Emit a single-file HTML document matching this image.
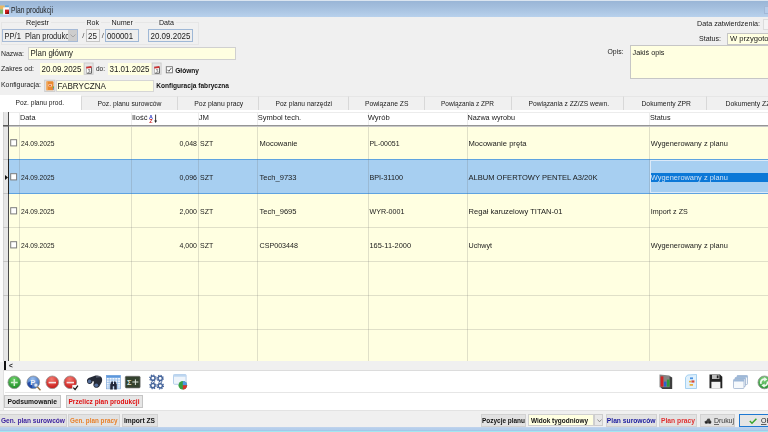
<!DOCTYPE html>
<html lang="pl"><head><meta charset="utf-8"><title>Plan produkcji</title>
<style>
html,body{margin:0;padding:0;}
body{width:768px;height:432px;overflow:hidden;position:relative;background:#f0f0f0;font-family:"Liberation Sans", sans-serif;}
.b{position:absolute;box-sizing:border-box;}
svg{position:absolute;overflow:visible;}
svg.t{left:0;top:0;font-family:"Liberation Sans", sans-serif;white-space:pre;will-change:transform;}
</style></head><body>
<div class="b" style="left:0px;top:0px;width:768px;height:16.5px;background:linear-gradient(#98b4d5 0%,#a3bedd 40%,#b8d1ec 100%);"></div>
<div class="b" style="left:0px;top:0px;width:768px;height:1px;background:#dbe5f0;"></div>
<svg style="left:0;top:5px" width="10" height="10" viewBox="0 0 10 10"><rect x="0" y="0.5" width="4.6" height="4" fill="#eab862"/><rect x="0" y="4.5" width="3.2" height="4.2" fill="#7fb96c"/><rect x="5" y="0.4" width="3.8" height="1.6" fill="#5aa8df"/><rect x="3.2" y="2.4" width="5.8" height="7.2" fill="#fdfdfd"/><rect x="5" y="4.6" width="4" height="4.4" fill="#cc1f1f"/><path d="M5 9 L9 9 L9 6 Z" fill="#8e1010"/></svg>
<svg class="t" width="768" height="432">
<text x="11" y="13" font-size="8.4" fill="#1e1e1e" textLength="42" lengthAdjust="spacingAndGlyphs">Plan produkcji</text>
</svg>
<div class="b" style="left:763.5px;top:6px;width:6px;height:8px;background:#b6cdea;border:1px solid #a2b8d6;"></div>
<div class="b" style="left:0.5px;top:22px;width:198.5px;height:22.5px;border:1px solid #e6e6e6;"></div>
<div class="b" style="left:24px;top:20px;width:27px;height:4px;background:#f0f0f0;"></div>
<svg class="t" width="768" height="432">
<text x="26" y="25" font-size="7.8" fill="#1a1a1a" textLength="23" lengthAdjust="spacingAndGlyphs">Rejestr</text>
</svg>
<div class="b" style="left:85px;top:20px;width:15.5px;height:4px;background:#f0f0f0;"></div>
<svg class="t" width="768" height="432">
<text x="86.5" y="25" font-size="7.8" fill="#1a1a1a" textLength="12.5" lengthAdjust="spacingAndGlyphs">Rok</text>
</svg>
<div class="b" style="left:110px;top:20px;width:24.5px;height:4px;background:#f0f0f0;"></div>
<svg class="t" width="768" height="432">
<text x="111.5" y="25" font-size="7.8" fill="#1a1a1a" textLength="21.5" lengthAdjust="spacingAndGlyphs">Numer</text>
</svg>
<div class="b" style="left:157.5px;top:20px;width:18px;height:4px;background:#f0f0f0;"></div>
<svg class="t" width="768" height="432">
<text x="159" y="25" font-size="7.8" fill="#1a1a1a" textLength="15" lengthAdjust="spacingAndGlyphs">Data</text>
</svg>
<div class="b" style="left:2px;top:29px;width:76px;height:13px;background:#eeeeee;border:1px solid #a6bad6;"></div>
<svg class="t" width="768" height="432">
<text x="4.5" y="39" font-size="9.2" fill="#1a1a1a" textLength="64.5" lengthAdjust="spacingAndGlyphs">PP/1  Plan produkc</text>
</svg>
<div class="b" style="left:67.7px;top:30px;width:9.3px;height:11px;background:#cdcdcd;"></div>
<svg style="left:70px;top:34px" width="6" height="4" viewBox="0 0 6 4"><path d="M0.5 0.5 L3 3 L5.5 0.5" fill="none" stroke="#9a9a9a" stroke-width="0.8"/></svg>
<svg class="t" width="768" height="432">
<text x="82.3" y="38" font-size="7.6" fill="#444">/</text>
</svg>
<div class="b" style="left:86px;top:29px;width:14px;height:13px;background:#f4f4f4;border:1px solid #c4c4c4;"></div>
<svg class="t" width="768" height="432">
<text x="88" y="39" font-size="9.2" fill="#1a1a1a" textLength="9" lengthAdjust="spacingAndGlyphs">25</text>
<text x="101.8" y="38" font-size="7.6" fill="#444">/</text>
</svg>
<div class="b" style="left:105px;top:29px;width:34px;height:13px;background:#eeeeee;border:1px solid #9fb8d6;"></div>
<svg class="t" width="768" height="432">
<text x="107" y="39" font-size="9.2" fill="#1a1a1a" textLength="26" lengthAdjust="spacingAndGlyphs">000001</text>
</svg>
<div class="b" style="left:148.3px;top:29px;width:44.5px;height:13px;background:#eeeeee;border:1px solid #9fb8d6;"></div>
<svg class="t" width="768" height="432">
<text x="150.5" y="39" font-size="9.2" fill="#1a1a1a" textLength="40" lengthAdjust="spacingAndGlyphs">20.09.2025</text>
<text x="697" y="26" font-size="7.8" fill="#1a1a1a" textLength="63" lengthAdjust="spacingAndGlyphs">Data zatwierdzenia:</text>
</svg>
<div class="b" style="left:763px;top:18.7px;width:8px;height:11.5px;background:#f4f4f4;border:1px solid #dcdcdc;"></div>
<svg class="t" width="768" height="432">
<text x="699" y="41" font-size="7.8" fill="#1a1a1a" textLength="22" lengthAdjust="spacingAndGlyphs">Status:</text>
</svg>
<div class="b" style="left:727px;top:33px;width:44px;height:12px;background:#ffffe1;border:1px solid #c6c6c6;"></div>
<svg class="t" width="768" height="432">
<text x="730" y="41" font-size="7.9" fill="#1a1a1a" textLength="38.6" lengthAdjust="spacingAndGlyphs">W przygoto</text>
<text x="1" y="56" font-size="7.8" fill="#1a1a1a" textLength="23" lengthAdjust="spacingAndGlyphs">Nazwa:</text>
</svg>
<div class="b" style="left:28px;top:46.5px;width:207.5px;height:13.5px;background:#ffffe1;border:1px solid #d0d0d0;"></div>
<svg class="t" width="768" height="432">
<text x="30.5" y="56" font-size="9.2" fill="#1a1a1a" textLength="42.5" lengthAdjust="spacingAndGlyphs">Plan główny</text>
<text x="607.5" y="54" font-size="7.8" fill="#1a1a1a" textLength="16" lengthAdjust="spacingAndGlyphs">Opis:</text>
</svg>
<div class="b" style="left:629.5px;top:45px;width:140px;height:34px;background:#ffffe1;border:1px solid #c6c6c6;"></div>
<svg class="t" width="768" height="432">
<text x="632.5" y="55" font-size="7.8" fill="#1a1a1a" textLength="32" lengthAdjust="spacingAndGlyphs">Jakiś opis</text>
<text x="1" y="71" font-size="7.8" fill="#1a1a1a" textLength="33" lengthAdjust="spacingAndGlyphs">Zakres od:</text>
</svg>
<div class="b" style="left:40px;top:63px;width:43.5px;height:12px;background:#ffffe1;"></div>
<svg class="t" width="768" height="432">
<text x="41.5" y="72" font-size="9.2" fill="#1a1a1a" textLength="40" lengthAdjust="spacingAndGlyphs">20.09.2025</text>
</svg>
<svg style="left:0;top:0" width="768" height="432"><rect x="84.1" y="63.0" width="9.0" height="11.3" fill="#e6e6e6" stroke="#c9c9c9" stroke-width="0.9"/></svg>
<svg style="left:85.7px;top:65.6px" width="6" height="8" viewBox="0 0 6 8"><rect x="0.4" y="0.8" width="5" height="6.4" fill="#fbfbfb" stroke="#8a8a8a" stroke-width="0.5"/><path d="M0.2 0.9 L5.4 0.1 L5.6 2 L0.3 2.6 Z" fill="#d23030"/><path d="M5.5 1.5 V7.2 H1" stroke="#444" stroke-width="0.7" fill="none"/><path d="M2 3.6 H3.8 L3 4.8 C4.2 4.8 4.2 6.4 2 6.3" stroke="#555" stroke-width="0.6" fill="none"/></svg>
<svg class="t" width="768" height="432">
<text x="96" y="71" font-size="7.8" fill="#1a1a1a" textLength="9" lengthAdjust="spacingAndGlyphs">do:</text>
</svg>
<div class="b" style="left:108px;top:63px;width:43.5px;height:12px;background:#ffffe1;"></div>
<svg class="t" width="768" height="432">
<text x="109.5" y="72" font-size="9.2" fill="#1a1a1a" textLength="40" lengthAdjust="spacingAndGlyphs">31.01.2025</text>
</svg>
<svg style="left:0;top:0" width="768" height="432"><rect x="152.1" y="63.0" width="9.0" height="11.3" fill="#e6e6e6" stroke="#c9c9c9" stroke-width="0.9"/></svg>
<svg style="left:153.7px;top:65.6px" width="6" height="8" viewBox="0 0 6 8"><rect x="0.4" y="0.8" width="5" height="6.4" fill="#fbfbfb" stroke="#8a8a8a" stroke-width="0.5"/><path d="M0.2 0.9 L5.4 0.1 L5.6 2 L0.3 2.6 Z" fill="#d23030"/><path d="M5.5 1.5 V7.2 H1" stroke="#444" stroke-width="0.7" fill="none"/><path d="M2 3.6 H3.8 L3 4.8 C4.2 4.8 4.2 6.4 2 6.3" stroke="#555" stroke-width="0.6" fill="none"/></svg>
<svg style="left:0;top:0" width="768" height="432"><rect x="166.3" y="66.7" width="6.1" height="6.1" fill="#fff" stroke="#707070" stroke-width="0.9"/><path d="M167.5 69.8 L168.9 71.3 L171.3 68" fill="none" stroke="#2a2a2a" stroke-width="0.8"/></svg>
<svg class="t" width="768" height="432">
<text x="175.2" y="73" font-size="7.8" fill="#111" textLength="23.8" lengthAdjust="spacingAndGlyphs" font-weight="bold">Główny</text>
<text x="1" y="87" font-size="7.8" fill="#1a1a1a" textLength="40" lengthAdjust="spacingAndGlyphs">Konfiguracja:</text>
</svg>
<svg style="left:0;top:0" width="768" height="432"><rect x="44.7" y="80.2" width="10.2" height="11.2" fill="#e6e6e6" stroke="#c9c9c9" stroke-width="0.9"/></svg>
<svg style="left:46px;top:81.2px" width="8" height="10" viewBox="0 0 8 10"><rect x="0.3" y="0.3" width="7.2" height="9" rx="0.9" fill="#e98a30"/><rect x="0.3" y="0.3" width="1.3" height="9" fill="#f4b676"/><rect x="2.4" y="3.4" width="3.6" height="2" fill="#fbe6cf"/><rect x="3" y="4" width="2.2" height="0.8" fill="#d64a2a"/><rect x="6.9" y="5.4" width="1" height="1.6" fill="#4caf50"/><rect x="6.9" y="7.2" width="1" height="1.4" fill="#4a78d0"/></svg>
<div class="b" style="left:55.5px;top:79.5px;width:98px;height:12.7px;background:#ffffe1;border:1px solid #d6d6d6;"></div>
<svg class="t" width="768" height="432">
<text x="57.5" y="89" font-size="9.2" fill="#1a1a1a" textLength="48.5" lengthAdjust="spacingAndGlyphs">FABRYCZNA</text>
<text x="156.2" y="88" font-size="8" fill="#111" textLength="72.8" lengthAdjust="spacingAndGlyphs" font-weight="bold">Konfiguracja fabryczna</text>
</svg>
<div class="b" style="left:0px;top:109.5px;width:768px;height:3px;background:#ffffff;"></div>
<div class="b" style="left:0px;top:95px;width:81px;height:16px;background:#ffffff;"></div>
<svg class="t" width="768" height="432">
<text x="15.5" y="105" font-size="8" fill="#1a1a1a" textLength="48.5" lengthAdjust="spacingAndGlyphs">Poz. planu prod.</text>
</svg>
<div class="b" style="left:81px;top:96.3px;width:96.5px;height:13.3px;background:#f0f0f0;border-left:1px solid #d8d8d8;border-top:1px solid #e6e6e6;"></div>
<svg class="t" width="768" height="432">
<text x="97.5" y="106" font-size="8" fill="#1a1a1a" textLength="64" lengthAdjust="spacingAndGlyphs">Poz. planu surowców</text>
</svg>
<div class="b" style="left:176.6px;top:96.3px;width:82.9px;height:13.3px;background:#f0f0f0;border-left:1px solid #d8d8d8;border-top:1px solid #e6e6e6;"></div>
<svg class="t" width="768" height="432">
<text x="194.3" y="106" font-size="8" fill="#1a1a1a" textLength="49" lengthAdjust="spacingAndGlyphs">Poz planu pracy</text>
</svg>
<div class="b" style="left:257.8px;top:96.3px;width:91.19999999999999px;height:13.3px;background:#f0f0f0;border-left:1px solid #d8d8d8;border-top:1px solid #e6e6e6;"></div>
<svg class="t" width="768" height="432">
<text x="275.5" y="106" font-size="8" fill="#1a1a1a" textLength="56.5" lengthAdjust="spacingAndGlyphs">Poz planu narzędzi</text>
</svg>
<div class="b" style="left:347.6px;top:96.3px;width:77.39999999999998px;height:13.3px;background:#f0f0f0;border-left:1px solid #d8d8d8;border-top:1px solid #e6e6e6;"></div>
<svg class="t" width="768" height="432">
<text x="365" y="106" font-size="8" fill="#1a1a1a" textLength="43.5" lengthAdjust="spacingAndGlyphs">Powiązane ZS</text>
</svg>
<div class="b" style="left:423.6px;top:96.3px;width:88.39999999999998px;height:13.3px;background:#f0f0f0;border-left:1px solid #d8d8d8;border-top:1px solid #e6e6e6;"></div>
<svg class="t" width="768" height="432">
<text x="441" y="106" font-size="8" fill="#1a1a1a" textLength="53" lengthAdjust="spacingAndGlyphs">Powiązania z ZPR</text>
</svg>
<div class="b" style="left:510.8px;top:96.3px;width:114.19999999999999px;height:13.3px;background:#f0f0f0;border-left:1px solid #d8d8d8;border-top:1px solid #e6e6e6;"></div>
<svg class="t" width="768" height="432">
<text x="528.5" y="106" font-size="8" fill="#1a1a1a" textLength="80.5" lengthAdjust="spacingAndGlyphs">Powiązania z ZZ/ZS wewn.</text>
</svg>
<div class="b" style="left:623.4px;top:96.3px;width:85.10000000000002px;height:13.3px;background:#f0f0f0;border-left:1px solid #d8d8d8;border-top:1px solid #e6e6e6;"></div>
<svg class="t" width="768" height="432">
<text x="641.5" y="106" font-size="8" fill="#1a1a1a" textLength="49.5" lengthAdjust="spacingAndGlyphs">Dokumenty ZPR</text>
</svg>
<div class="b" style="left:706.4px;top:96.3px;width:84.60000000000002px;height:13.3px;background:#f0f0f0;border-left:1px solid #d8d8d8;border-top:1px solid #e6e6e6;"></div>
<svg class="t" width="768" height="432">
<text x="725.5" y="106" font-size="8" fill="#1a1a1a" textLength="45" lengthAdjust="spacingAndGlyphs">Dokumenty ZZ</text>
</svg>
<div class="b" style="left:0px;top:110px;width:768px;height:2px;background:#ffffff;"></div>
<div class="b" style="left:0px;top:112px;width:768px;height:14px;background:#ffffff;"></div>
<div class="b" style="left:3px;top:111.5px;width:765px;height:1px;background:#ececec;"></div>
<div class="b" style="left:0px;top:112px;width:3px;height:250px;background:#fbfbfb;"></div>
<div class="b" style="left:3px;top:112px;width:5px;height:249px;background:#e6e6e6;border-left:1px solid #d4d4d4;"></div>
<div class="b" style="left:8px;top:112px;width:1px;height:249px;background:#4a4a4a;"></div>
<div class="b" style="left:9px;top:126.5px;width:759px;height:234.5px;background:#ffffe1;"></div>
<div class="b" style="left:9px;top:159px;width:759px;height:35px;background:#a7cff1;border-top:1px solid #5fa3e0;border-bottom:1px solid #5fa3e0;"></div>
<div class="b" style="left:8px;top:159px;width:1px;height:35px;background:#222;"></div>
<svg style="left:0;top:0" width="768" height="432"><rect x="3" y="125.1" width="765" height="1.3" fill="#8a8a8a"/><rect x="3" y="125.1" width="6" height="1.3" fill="#555"/></svg>
<div class="b" style="left:19px;top:126.5px;width:1px;height:234.5px;background:rgba(110,110,110,0.21);"></div>
<div class="b" style="left:19px;top:112px;width:1px;height:13px;background:#ececec;"></div>
<div class="b" style="left:131px;top:126.5px;width:1px;height:234.5px;background:rgba(110,110,110,0.21);"></div>
<div class="b" style="left:131px;top:112px;width:1px;height:13px;background:#ececec;"></div>
<div class="b" style="left:198px;top:126.5px;width:1px;height:234.5px;background:rgba(110,110,110,0.21);"></div>
<div class="b" style="left:198px;top:112px;width:1px;height:13px;background:#ececec;"></div>
<div class="b" style="left:257px;top:126.5px;width:1px;height:234.5px;background:rgba(110,110,110,0.21);"></div>
<div class="b" style="left:257px;top:112px;width:1px;height:13px;background:#ececec;"></div>
<div class="b" style="left:368px;top:126.5px;width:1px;height:234.5px;background:rgba(110,110,110,0.21);"></div>
<div class="b" style="left:368px;top:112px;width:1px;height:13px;background:#ececec;"></div>
<div class="b" style="left:467px;top:126.5px;width:1px;height:234.5px;background:rgba(110,110,110,0.21);"></div>
<div class="b" style="left:467px;top:112px;width:1px;height:13px;background:#ececec;"></div>
<div class="b" style="left:649px;top:126.5px;width:1px;height:234.5px;background:rgba(110,110,110,0.21);"></div>
<div class="b" style="left:649px;top:112px;width:1px;height:13px;background:#ececec;"></div>
<div class="b" style="left:9px;top:227px;width:759px;height:1px;background:rgba(110,110,110,0.21);"></div>
<div class="b" style="left:9px;top:261px;width:759px;height:1px;background:rgba(110,110,110,0.21);"></div>
<div class="b" style="left:9px;top:295px;width:759px;height:1px;background:rgba(110,110,110,0.21);"></div>
<div class="b" style="left:9px;top:329px;width:759px;height:1px;background:rgba(110,110,110,0.21);"></div>
<div class="b" style="left:3px;top:159px;width:5px;height:1px;background:#c4c4c4;"></div>
<div class="b" style="left:3px;top:193px;width:5px;height:1px;background:#c4c4c4;"></div>
<div class="b" style="left:3px;top:227px;width:5px;height:1px;background:#c4c4c4;"></div>
<div class="b" style="left:3px;top:261px;width:5px;height:1px;background:#c4c4c4;"></div>
<div class="b" style="left:3px;top:295px;width:5px;height:1px;background:#c4c4c4;"></div>
<div class="b" style="left:3px;top:329px;width:5px;height:1px;background:#c4c4c4;"></div>
<svg class="t" width="768" height="432">
<text x="20" y="120" font-size="7.8" fill="#1a1a1a" textLength="15.5" lengthAdjust="spacingAndGlyphs">Data</text>
<text x="132" y="120" font-size="7.8" fill="#1a1a1a" textLength="15.5" lengthAdjust="spacingAndGlyphs">Ilość</text>
</svg>
<svg style="left:149px;top:114px" width="9" height="10" viewBox="0 0 9 10"><text x="0" y="4.6" font-size="5.4" font-weight="bold" fill="#2a3cc0" font-family="Liberation Sans, sans-serif">A</text><text x="0.2" y="9.2" font-size="5.4" font-weight="bold" fill="#cc2222" font-family="Liberation Sans, sans-serif">Z</text><path d="M6.6 0.6 V7.4" stroke="#222" stroke-width="0.9" fill="none"/><path d="M5.2 6.4 L6.6 9 L8 6.4 Z" fill="#222"/></svg>
<svg class="t" width="768" height="432">
<text x="198.7" y="120" font-size="7.8" fill="#1a1a1a" textLength="10.3" lengthAdjust="spacingAndGlyphs">JM</text>
<text x="257.7" y="120" font-size="7.8" fill="#1a1a1a" textLength="43.5" lengthAdjust="spacingAndGlyphs">Symbol tech.</text>
<text x="367.7" y="120" font-size="7.8" fill="#1a1a1a" textLength="22" lengthAdjust="spacingAndGlyphs">Wyrób</text>
<text x="467.5" y="120" font-size="7.8" fill="#1a1a1a" textLength="47.5" lengthAdjust="spacingAndGlyphs">Nazwa wyrobu</text>
<text x="650" y="120" font-size="7.8" fill="#1a1a1a" textLength="20.5" lengthAdjust="spacingAndGlyphs">Status</text>
</svg>
<svg style="left:0;top:0" width="768" height="432"><rect x="10.7" y="139.7" width="5.9" height="6.2" fill="#fff" stroke="#7c7c7c" stroke-width="1"/></svg>
<svg class="t" width="768" height="432">
<text x="21" y="146" font-size="7.8" fill="#1a1a1a" textLength="33.5" lengthAdjust="spacingAndGlyphs">24.09.2025</text>
<text x="197" y="146" font-size="7.8" fill="#1a1a1a" textLength="17.5" lengthAdjust="spacingAndGlyphs" text-anchor="end">0,048</text>
<text x="200" y="146" font-size="7.8" fill="#1a1a1a" textLength="13.2" lengthAdjust="spacingAndGlyphs">SZT</text>
<text x="259.5" y="146" font-size="7.8" fill="#1a1a1a" textLength="38" lengthAdjust="spacingAndGlyphs">Mocowanie</text>
<text x="369.5" y="146" font-size="7.8" fill="#1a1a1a" textLength="30" lengthAdjust="spacingAndGlyphs">PL-00051</text>
<text x="468.5" y="146" font-size="7.8" fill="#1a1a1a" textLength="58" lengthAdjust="spacingAndGlyphs">Mocowanie pręta</text>
<text x="650.8" y="146" font-size="7.8" fill="#1a1a1a" textLength="77" lengthAdjust="spacingAndGlyphs">Wygenerowany z planu</text>
</svg>
<svg style="left:0;top:0" width="768" height="432"><rect x="10.7" y="173.7" width="5.9" height="6.2" fill="#fff" stroke="#7c7c7c" stroke-width="1"/></svg>
<svg class="t" width="768" height="432">
<text x="21" y="180" font-size="7.8" fill="#1a1a1a" textLength="33.5" lengthAdjust="spacingAndGlyphs">24.09.2025</text>
<text x="197" y="180" font-size="7.8" fill="#1a1a1a" textLength="17.5" lengthAdjust="spacingAndGlyphs" text-anchor="end">0,096</text>
<text x="200" y="180" font-size="7.8" fill="#1a1a1a" textLength="13.2" lengthAdjust="spacingAndGlyphs">SZT</text>
<text x="259.5" y="180" font-size="7.8" fill="#1a1a1a" textLength="37" lengthAdjust="spacingAndGlyphs">Tech_9733</text>
<text x="369.5" y="180" font-size="7.8" fill="#1a1a1a" textLength="33.5" lengthAdjust="spacingAndGlyphs">BPI-31100</text>
<text x="468.5" y="180" font-size="7.8" fill="#1a1a1a" textLength="129" lengthAdjust="spacingAndGlyphs">ALBUM OFERTOWY PENTEL A3/20K</text>
</svg>
<div class="b" style="left:650px;top:160px;width:119px;height:33px;border:1px solid #dbe9f8;border-right:none;"></div>
<div class="b" style="left:651px;top:173px;width:117px;height:9px;background:#0b78d7;"></div>
<svg class="t" width="768" height="432">
<text x="650.8" y="180" font-size="7.8" fill="#cfe2f7" textLength="77" lengthAdjust="spacingAndGlyphs">Wygenerowany z planu</text>
</svg>
<svg style="left:0;top:0" width="768" height="432"><rect x="10.7" y="207.7" width="5.9" height="6.2" fill="#fff" stroke="#7c7c7c" stroke-width="1"/></svg>
<svg class="t" width="768" height="432">
<text x="21" y="214" font-size="7.8" fill="#1a1a1a" textLength="33.5" lengthAdjust="spacingAndGlyphs">24.09.2025</text>
<text x="197" y="214" font-size="7.8" fill="#1a1a1a" textLength="17.5" lengthAdjust="spacingAndGlyphs" text-anchor="end">2,000</text>
<text x="200" y="214" font-size="7.8" fill="#1a1a1a" textLength="13.2" lengthAdjust="spacingAndGlyphs">SZT</text>
<text x="259.5" y="214" font-size="7.8" fill="#1a1a1a" textLength="37" lengthAdjust="spacingAndGlyphs">Tech_9695</text>
<text x="369.5" y="214" font-size="7.8" fill="#1a1a1a" textLength="35" lengthAdjust="spacingAndGlyphs">WYR-0001</text>
<text x="468.5" y="214" font-size="7.8" fill="#1a1a1a" textLength="94" lengthAdjust="spacingAndGlyphs">Regał karuzelowy TITAN-01</text>
<text x="650.8" y="214" font-size="7.8" fill="#1a1a1a" textLength="37" lengthAdjust="spacingAndGlyphs">Import z ZS</text>
</svg>
<svg style="left:0;top:0" width="768" height="432"><rect x="10.7" y="241.7" width="5.9" height="6.2" fill="#fff" stroke="#7c7c7c" stroke-width="1"/></svg>
<svg class="t" width="768" height="432">
<text x="21" y="248" font-size="7.8" fill="#1a1a1a" textLength="33.5" lengthAdjust="spacingAndGlyphs">24.09.2025</text>
<text x="197" y="248" font-size="7.8" fill="#1a1a1a" textLength="17.5" lengthAdjust="spacingAndGlyphs" text-anchor="end">4,000</text>
<text x="200" y="248" font-size="7.8" fill="#1a1a1a" textLength="13.2" lengthAdjust="spacingAndGlyphs">SZT</text>
<text x="259.5" y="248" font-size="7.8" fill="#1a1a1a" textLength="38.5" lengthAdjust="spacingAndGlyphs">CSP003448</text>
<text x="369.5" y="248" font-size="7.8" fill="#1a1a1a" textLength="41.5" lengthAdjust="spacingAndGlyphs">165-11-2000</text>
<text x="468.5" y="248" font-size="7.8" fill="#1a1a1a" textLength="23.5" lengthAdjust="spacingAndGlyphs">Uchwyt</text>
<text x="650.8" y="248" font-size="7.8" fill="#1a1a1a" textLength="77" lengthAdjust="spacingAndGlyphs">Wygenerowany z planu</text>
</svg>
<svg style="left:5.3px;top:174.5px" width="3" height="5" viewBox="0 0 3 5"><path d="M0 0 L3 2.5 L0 5 Z" fill="#111"/></svg>
<div class="b" style="left:3.5px;top:361px;width:765px;height:9.5px;background:#f0f0f0;"></div>
<div class="b" style="left:4px;top:361px;width:1.6px;height:8.5px;background:#111;"></div>
<svg class="t" width="768" height="432">
<text x="9" y="368" font-size="6.5" fill="#222" font-weight="bold">&lt;</text>
</svg>
<div class="b" style="left:3px;top:370px;width:765px;height:40px;background:#ffffff;border-top:1px solid #dcdcdc;border-left:1px solid #e0e0e0;"></div>
<div class="b" style="left:4.5px;top:391.7px;width:764px;height:1px;background:#e6e6e6;"></div>
<svg style="left:5.8px;top:373.7px" width="16.6" height="16.6" viewBox="-8.3 -8.3 16.6 16.6"><defs><radialGradient id="g14" cx="45%" cy="25%" r="80%"><stop offset="0" stop-color="#6fd06a"/><stop offset="1" stop-color="#178a22"/></radialGradient></defs><circle r="6.3" fill="url(#g14)" stroke="#8e8e8e" stroke-width="0.8"/><path d="M-3.4 0.2 H3.4 M0 -3.2 V3.6" stroke="#d4efd2" stroke-width="1.5"/></svg>
<svg style="left:24.499999999999996px;top:373.7px" width="16.6" height="16.6" viewBox="-8.3 -8.3 16.6 16.6"><defs><radialGradient id="g32" cx="45%" cy="25%" r="80%"><stop offset="0" stop-color="#9cc0ee"/><stop offset="1" stop-color="#2058b4"/></radialGradient></defs><circle r="6.3" fill="url(#g32)" stroke="#8e8e8e" stroke-width="0.8"/><path d="M-6 1 A6.3 6.3 0 0 0 -1 6 L-1.5 -2 Z" fill="#1c3c9a" opacity="0.8"/><text x="-3" y="2.4" font-size="7.6" font-weight="bold" fill="#eef3fb" font-family="Liberation Sans, sans-serif">P</text><path d="M4 4.5 L7.2 8" stroke="#96703a" stroke-width="1.3"/><circle cx="2.6" cy="2.8" r="1.9" fill="#dfe9f6" stroke="#6f86ad" stroke-width="0.5"/></svg>
<svg style="left:43.6px;top:373.7px" width="16.6" height="16.6" viewBox="-8.3 -8.3 16.6 16.6"><defs><radialGradient id="g51" cx="45%" cy="25%" r="80%"><stop offset="0" stop-color="#f47a70"/><stop offset="1" stop-color="#c40f0f"/></radialGradient></defs><circle r="6.3" fill="url(#g51)" stroke="#8e8e8e" stroke-width="0.8"/><path d="M-3.7 0.3 H3.7" stroke="#f6e4e4" stroke-width="1.6"/></svg>
<svg style="left:62.3px;top:373.7px" width="16.6" height="16.6" viewBox="-8.3 -8.3 16.6 16.6"><defs><radialGradient id="g70" cx="45%" cy="25%" r="80%"><stop offset="0" stop-color="#f47a70"/><stop offset="1" stop-color="#c40f0f"/></radialGradient></defs><circle r="6.3" fill="url(#g70)" stroke="#8e8e8e" stroke-width="0.8"/><path d="M-3.7 0.3 H3.7" stroke="#f6e4e4" stroke-width="1.6"/><rect x="2" y="2.6" width="6.2" height="5.8" fill="#f6f6f6"/><path d="M3 5.4 L4.8 7.2 L7.6 3.4" stroke="#111" stroke-width="1.2" fill="none"/></svg>
<svg style="left:0;top:0" width="768" height="432"><path d="M87 381.5 C86.6 379.5 88 378.2 90 377.6 L95.5 375.6 C98 375 100.6 375.8 101.6 377.6 C102.6 379.6 102.2 382 101 383.6 L99.6 386 C98.8 387.8 96.4 388.2 94.8 387.4 C93.4 386.6 93 385 93.6 383.6 L94 381.6 L92.6 381.2 C92.4 383 91 384.2 89.4 384 C88 383.8 87.2 382.8 87 381.5 Z" fill="#262b38"/><ellipse cx="89.5" cy="381.3" rx="1.7" ry="1.9" fill="#56709c"/><ellipse cx="96.3" cy="385.2" rx="1.9" ry="1.7" fill="#56709c"/><path d="M96 377 L100 376.6" stroke="#7d8798" stroke-width="0.8"/></svg>
<svg style="left:106.2px;top:374.5px" width="15" height="15" viewBox="0 0 15 15"><rect x="0.4" y="0.4" width="14" height="13.4" fill="#f2f7fd" stroke="#7fa6d8" stroke-width="0.7"/><rect x="0.4" y="0.4" width="14" height="2.4" fill="#5b97dc"/><path d="M0.4 5 H14.4 M0.4 7.4 H14.4 M0.4 9.8 H14.4 M0.4 12 H14.4 M3.2 2.8 V13.8 M6 2.8 V13.8 M8.8 2.8 V13.8 M11.6 2.8 V13.8" stroke="#8db4e4" stroke-width="0.7"/><path d="M4.2 14.4 V9.6 L5.6 6.4 H7 V9 H8 V6.4 H9.4 L10.8 9.6 V14.4 H8.2 V11.2 H6.8 V14.4 Z" fill="#23283a"/></svg>
<svg style="left:125px;top:375.6px" width="16" height="13" viewBox="0 0 16 13"><rect x="0.3" y="0.3" width="14.8" height="11.6" rx="1" fill="#34422e" stroke="#6c6c6c" stroke-width="0.7"/><text x="2" y="9" font-size="7.4" font-weight="bold" fill="#dfe6dc" font-family="Liberation Sans, sans-serif">Σ</text><path d="M7.4 6 H13.4 M10.4 3.4 V9" stroke="#dfe6dc" stroke-width="1"/></svg>
<svg style="left:0;top:0" width="768" height="432"><g transform="translate(152.9,378.2)"><circle r="2.15" fill="none" stroke="#44639a" stroke-width="1.5"/><circle r="3.2" fill="none" stroke="#44639a" stroke-width="1.1" stroke-dasharray="1.25 1.263"/></g><g transform="translate(160.2,378.4)"><circle r="2.15" fill="none" stroke="#44639a" stroke-width="1.5"/><circle r="3.2" fill="none" stroke="#44639a" stroke-width="1.1" stroke-dasharray="1.25 1.263"/></g><g transform="translate(152.9,385.6)"><circle r="2.15" fill="none" stroke="#44639a" stroke-width="1.5"/><circle r="3.2" fill="none" stroke="#44639a" stroke-width="1.1" stroke-dasharray="1.25 1.263"/></g><g transform="translate(160.3,385.8)"><circle r="2.15" fill="none" stroke="#44639a" stroke-width="1.5"/><circle r="3.2" fill="none" stroke="#44639a" stroke-width="1.1" stroke-dasharray="1.25 1.263"/></g></svg>
<svg style="left:173px;top:374.3px" width="17" height="17" viewBox="0 0 17 17"><rect x="0.5" y="0.5" width="12.6" height="9.8" rx="1" fill="#eef4fb" stroke="#a4c4e6" stroke-width="0.8"/><rect x="0.5" y="0.5" width="12.6" height="2.2" fill="#bdd6f0"/><circle cx="9.8" cy="11.2" r="4.3" fill="#37a043"/><path d="M9.8 11.2 V6.9 A4.3 4.3 0 0 1 14.1 11.2 Z" fill="#4f96e4"/><path d="M9.8 11.2 H14.1 A4.3 4.3 0 0 1 9.8 15.5 Z" fill="#d93030"/></svg>
<svg style="left:658.7px;top:374px" width="14" height="16" viewBox="0 0 14 16"><path d="M1.6 1.4 L11 2.2 L13.2 3.6 V15 H3.4 L1.6 13.6 Z" fill="#3e3e3e"/><path d="M0.5 0.6 L10.6 1.4 V13.2 H0.5 Z" fill="#858585"/><rect x="1.6" y="2.4" width="2.8" height="10.2" fill="#d02222"/><rect x="4.9" y="7.6" width="2.6" height="5" fill="#2f62cc"/><rect x="7.9" y="5.6" width="2.6" height="7" fill="#2c9a38"/></svg>
<svg style="left:685px;top:374px" width="12" height="15" viewBox="0 0 12 15"><path d="M2.5 1 L11.5 0.5 V14.5 H0.5 V3.5 Z" fill="#dff0fc" stroke="#93c6ee" stroke-width="0.8"/><rect x="5" y="3.4" width="3" height="1.8" fill="#4a90e0"/><rect x="6.4" y="6.4" width="3" height="2.2" fill="#d84a3a"/><rect x="4" y="6.8" width="2" height="1.6" fill="#e8b040"/><rect x="4.6" y="10" width="3.4" height="1.8" fill="#e8b040"/></svg>
<svg style="left:709.3px;top:374.2px" width="14" height="15" viewBox="0 0 14 15"><path d="M0.5 0.5 H11 L13.3 2.8 V14.3 H0.5 Z" fill="#222"/><rect x="3" y="0.8" width="7.4" height="4.2" fill="#bdbdbd"/><rect x="7.8" y="1.4" width="1.7" height="2.8" fill="#222"/><rect x="2.4" y="7.8" width="9" height="6.5" fill="#f2f2f2"/></svg>
<svg style="left:732.5px;top:375px" width="15" height="14" viewBox="0 0 15 14"><rect x="4" y="0.5" width="10.5" height="9" rx="0.8" fill="#f2f6fb" stroke="#93abc8" stroke-width="0.7"/><rect x="4" y="0.5" width="10.5" height="2" fill="#9db8d8"/><rect x="2" y="2.5" width="10.5" height="9" rx="0.8" fill="#f2f6fb" stroke="#93abc8" stroke-width="0.7"/><rect x="2" y="2.5" width="10.5" height="2" fill="#9db8d8"/><rect x="0.5" y="4.5" width="10.5" height="9" rx="0.8" fill="#f6f9fc" stroke="#93abc8" stroke-width="0.7"/><rect x="0.5" y="4.5" width="10.5" height="2" fill="#9db8d8"/></svg>
<svg style="left:756.2px;top:373.6px" width="16.8" height="16.8" viewBox="-8.4 -8.4 16.8 16.8"><defs><radialGradient id="g764" cx="45%" cy="25%" r="80%"><stop offset="0" stop-color="#8ad885"/><stop offset="1" stop-color="#1c8c28"/></radialGradient></defs><circle r="6.4" fill="url(#g764)" stroke="#8e8e8e" stroke-width="0.8"/><path d="M-3.2 1.5 A3.4 3.4 0 0 1 0.5 -3.3" stroke="#eef8ee" stroke-width="1.7" fill="none"/><path d="M0 -5.4 L3 -2.8 L-0.4 -1 Z" fill="#eef8ee"/><path d="M3 -1 A3.4 3.4 0 0 1 -0.5 3.4" stroke="#eef8ee" stroke-width="1.7" fill="none"/><path d="M0 5.4 L-3 2.8 L0.4 1 Z" fill="#eef8ee"/></svg>
<div class="b" style="left:4px;top:395px;width:56.5px;height:12.5px;background:#e6e6e6;border:1px solid #c4c4c4;"></div>
<svg class="t" width="768" height="432">
<text x="7.5" y="404" font-size="7.5" fill="#111" textLength="49.5" lengthAdjust="spacingAndGlyphs" font-weight="bold">Podsumowanie</text>
</svg>
<div class="b" style="left:66px;top:395px;width:76.5px;height:12.5px;background:#e6e6e6;border:1px solid #c4c4c4;"></div>
<svg class="t" width="768" height="432">
<text x="68.5" y="404" font-size="7.5" fill="#e01010" textLength="71" lengthAdjust="spacingAndGlyphs" font-weight="bold">Przelicz plan produkcji</text>
</svg>
<div class="b" style="left:0px;top:410px;width:768px;height:18px;background:#f0f0f0;border-top:1px solid #e3e3e3;"></div>
<div class="b" style="left:-1px;top:414.2px;width:67.5px;height:12.5px;background:#e2e2e2;border:1px solid #d2d2d2;"></div>
<svg class="t" width="768" height="432">
<text x="1" y="423" font-size="7.5" fill="#3a1f9e" textLength="64" lengthAdjust="spacingAndGlyphs" font-weight="bold">Gen. plan surowców</text>
</svg>
<div class="b" style="left:68px;top:414.2px;width:51.5px;height:12.5px;background:#e2e2e2;border:1px solid #d2d2d2;"></div>
<svg class="t" width="768" height="432">
<text x="70" y="423" font-size="7.5" fill="#e8802a" textLength="47.5" lengthAdjust="spacingAndGlyphs" font-weight="bold">Gen. plan pracy</text>
</svg>
<div class="b" style="left:121.5px;top:414.2px;width:36.5px;height:12.5px;background:#e2e2e2;border:1px solid #d2d2d2;"></div>
<svg class="t" width="768" height="432">
<text x="124" y="423" font-size="7.5" fill="#111" textLength="31" lengthAdjust="spacingAndGlyphs" font-weight="bold">Import ZS</text>
</svg>
<div class="b" style="left:480.5px;top:414.2px;width:45.5px;height:12.5px;background:#e2e2e2;border:1px solid #d2d2d2;"></div>
<svg class="t" width="768" height="432">
<text x="482" y="423" font-size="7.5" fill="#111" textLength="43" lengthAdjust="spacingAndGlyphs" font-weight="bold">Pozycje planu</text>
</svg>
<div class="b" style="left:528.3px;top:414.2px;width:66px;height:12.2px;background:#ffffe1;border:1px solid #d0d0d0;"></div>
<svg class="t" width="768" height="432">
<text x="531" y="423" font-size="7.5" fill="#111" textLength="57" lengthAdjust="spacingAndGlyphs" font-weight="bold">Widok tygodniowy</text>
</svg>
<div class="b" style="left:594.3px;top:414.2px;width:9px;height:12.2px;background:#e8e8e8;border:1px solid #cdcdcd;"></div>
<svg style="left:596.5px;top:418.5px" width="5" height="4" viewBox="0 0 5 4"><path d="M0.5 0.5 L2.5 2.8 L4.5 0.5" fill="none" stroke="#777" stroke-width="0.8"/></svg>
<div class="b" style="left:605.5px;top:414.2px;width:51.0px;height:12.5px;background:#e2e2e2;border:1px solid #d2d2d2;"></div>
<svg class="t" width="768" height="432">
<text x="606.8" y="423" font-size="7.5" fill="#1a1a9e" textLength="48.8" lengthAdjust="spacingAndGlyphs" font-weight="bold">Plan surowców</text>
</svg>
<div class="b" style="left:658.8px;top:414.2px;width:38.200000000000045px;height:12.5px;background:#e2e2e2;border:1px solid #d2d2d2;"></div>
<svg class="t" width="768" height="432">
<text x="661" y="423" font-size="7.5" fill="#e03030" textLength="34" lengthAdjust="spacingAndGlyphs" font-weight="bold">Plan pracy</text>
</svg>
<div class="b" style="left:699.7px;top:414.2px;width:35.799999999999955px;height:12.5px;background:#e2e2e2;border:1px solid #d2d2d2;"></div>
<svg class="t" width="768" height="432">
<text x="714" y="423" font-size="7" fill="#333" textLength="20" lengthAdjust="spacingAndGlyphs"><tspan text-decoration="underline">D</tspan>rukuj</text>
</svg>
<svg style="left:704px;top:417.5px" width="8" height="6" viewBox="0 0 8 6"><path d="M1 5.5 L0.5 3.5 L2.5 2.5 L3.5 0.8 L5.5 0.5 L6.5 2.5 L7.5 3.8 L7 5.5 Z" fill="#444"/><circle cx="2.3" cy="4.6" r="1" fill="#222"/><circle cx="5.8" cy="4.6" r="1" fill="#222"/></svg>
<div class="b" style="left:738.8px;top:413.7px;width:32px;height:13.2px;background:#e5e5e5;border:1.3px solid #1e78d2;"></div>
<svg style="left:749px;top:417.5px" width="8" height="6" viewBox="0 0 8 6"><path d="M0.8 3 L3 5.2 L7.4 0.8" fill="none" stroke="#3aa52c" stroke-width="1.5"/></svg>
<svg class="t" width="768" height="432">
<text x="761" y="423" font-size="7" fill="#222"><tspan text-decoration="underline">O</tspan>K</text>
</svg>
<div class="b" style="left:0px;top:427px;width:768px;height:5px;background:linear-gradient(#c6d6ec 0%,#b7cfec 20%,#b4cdeb 62%,#a2c9ea 70%,#a2c9ea 80%,#a4e6f0 82%,#a4e6f0 100%);"></div>
</body></html>
